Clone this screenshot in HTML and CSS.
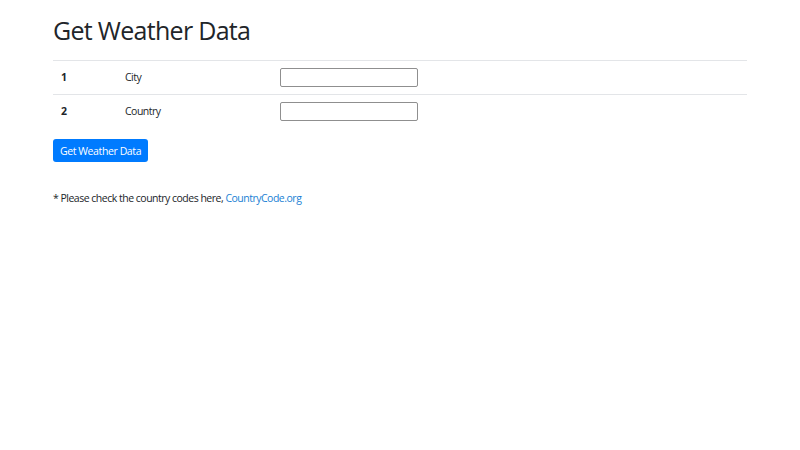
FILE: index.html
```html
<!DOCTYPE html>
<html>
<head>
<meta charset="utf-8">
<link rel="stylesheet" href="styles.css">
</head>
<body>
<div class="container">
  <h1 class="title">Get Weather Data</h1>
  <table class="table">
    <tr>
      <th class="num">1</th>
      <td class="label">City</td>
      <td><input class="field" type="text"></td>
    </tr>
    <tr>
      <th class="num">2</th>
      <td class="label">Country</td>
      <td><input class="field" type="text"></td>
    </tr>
  </table>
  <button class="btn">Get Weather Data</button>
  <p class="note">* Please check the country codes here, <a href="#" class="link">CountryCode.org</a></p>
</div>
</body>
</html>
```
FILE: styles.css
```css
html, body {
  margin: 0;
  padding: 0;
  background: #fff;
}
body {
  font-family: "Open Sans", "Noto Sans", sans-serif;
  font-size: 10.5px;
  letter-spacing: -0.5px;
  color: #212529;
}
.container {
  padding: 0 53px;
}
.title {
  font-size: 25px;
  font-weight: 400;
  letter-spacing: -0.7px;
  line-height: 34px;
  margin: 13px 0 13px 0;
}
.table {
  width: 100%;
  border-collapse: collapse;
}
.table th, .table td {
  border-top: 1px solid #e3e5e8;
  height: 31px;
  padding: 0 8px 2px 8px;
  text-align: left;
  vertical-align: middle;
  line-height: 14px;
}
.table th.num {
  width: 48px;
  font-weight: 700;
}
.label {
  width: 139px;
}
.field {
  display: block;
  box-sizing: border-box;
  width: 138px;
  height: 19px;
  border: 1px solid #8f8f8f;
  border-radius: 2px;
  margin: 2px 0 0 0;
  padding: 0 3px;
}
.btn {
  display: block;
  margin-top: 11px;
  height: 23px;
  width: 95px;
  padding: 0;
  background: #007bff;
  color: #fff;
  border: none;
  border-radius: 3px;
  font-family: "Open Sans", "Noto Sans", sans-serif;
  font-size: 10.5px;
  letter-spacing: -0.4px;
}
.note {
  margin: 28px 0 0 0;
  line-height: 16px;
}
.link {
  color: #1a7fd4;
  text-decoration: none;
}
```
